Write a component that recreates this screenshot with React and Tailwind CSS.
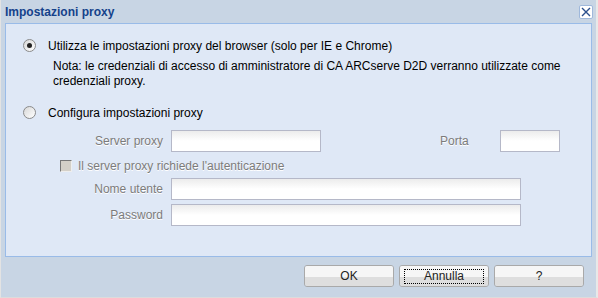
import React from "react";

function Radio({ checked }) {
  return (
    <span className="w-[13px] h-[13px] rounded-full border border-[#8a8a8a] bg-gradient-to-br from-[#d8d8d8] to-white flex items-center justify-center shrink-0">
      {checked ? <span className="w-[5px] h-[5px] rounded-full bg-[#222]" /> : null}
    </span>
  );
}

function Field({ w }) {
  return (
    <div
      className={
        "h-[22px] border border-[#b5b8c8] bg-gradient-to-b from-[#ececec] via-white to-white " + w
      }
    />
  );
}

function Btn({ children, focus }) {
  return (
    <div className="w-[90px] h-[22px] rounded-[3px] border border-[#a9a9a9] flex flex-col overflow-hidden relative">
      <div className="h-[11px] bg-[#f6f6f6]" />
      <div className="flex-1 bg-[#dedede]" />
      <div className="absolute inset-0 flex items-center justify-center">
        {focus ? (
          <span className="border border-dotted border-black w-[80px] h-[15px] flex items-center justify-center leading-none">
            {children}
          </span>
        ) : (
          children
        )}
      </div>
    </div>
  );
}

export default function App() {
  return (
    <div
      className="w-[598px] h-[298px] bg-[#c8d5e4] border-l border-b border-r-[2px] border-l-[#e3e3e3] border-b-[#dcdcdc] border-r-[#e8e8e8] flex flex-col text-[12px] text-black"
      style={{ fontFamily: '"Liberation Sans", Arial, sans-serif' }}
    >
      <div className="h-[23px] flex items-center justify-between pl-[4px] pr-[3px]">
        <span className="font-bold text-[#15428b] text-[12px]">Impostazioni proxy</span>
        <span className="w-[14px] h-[14px] rounded-[2px] border border-[#9fb8db] bg-white flex items-center justify-center">
          <svg width="10" height="10" viewBox="0 0 10 10">
            <path d="M1 1 L9 9 M9 1 L1 9" stroke="#2b4f8c" strokeWidth="1.4" />
          </svg>
        </span>
      </div>
      <div className="mx-[4px] h-[234px] bg-[#dfe8f6] border border-[#99bbe8] pl-[17px] pt-[14px]">
        <div className="flex items-center gap-[12px] h-[15px]">
          <Radio checked />
          <span>Utilizza le impostazioni proxy del browser (solo per IE e Chrome)</span>
        </div>
        <div className="pl-[30px] mt-[6px] leading-[15px] w-[560px]">
          Nota: le credenziali di accesso di amministratore di CA ARCserve D2D verranno utilizzate come credenziali proxy.
        </div>
        <div className="flex items-center gap-[12px] h-[15px] mt-[16px]">
          <Radio />
          <span>Configura impostazioni proxy</span>
        </div>
        <div className="text-[#7b7b7b] [text-shadow:0_1px_0_#ffffff]">
          <div className="flex items-center mt-[10px] h-[22px]">
            <span className="w-[140px] text-right">Server proxy</span>
            <div className="ml-[8px]"><Field w="w-[150px]" /></div>
            <span className="ml-[119px] w-[30px]">Porta</span>
            <div className="ml-[30px]"><Field w="w-[60px]" /></div>
          </div>
          <div className="flex items-center h-[16px] mt-[6px] pl-[37px] gap-[6px]">
            <span className="w-[12px] h-[12px] border border-[#777] border-r-[#eee] border-b-[#eee] bg-[#d4d0c8] shrink-0" />
            <span>Il server proxy richiede l'autenticazione</span>
          </div>
          <div className="flex items-center mt-[4px] h-[22px]">
            <span className="w-[140px] text-right">Nome utente</span>
            <div className="ml-[8px]"><Field w="w-[350px]" /></div>
          </div>
          <div className="flex items-center mt-[4px] h-[22px]">
            <span className="w-[140px] text-right">Password</span>
            <div className="ml-[8px]"><Field w="w-[350px]" /></div>
          </div>
        </div>
      </div>
      <div className="flex justify-end gap-[5px] pr-[12px] mt-[8px] text-[#222]">
        <Btn>OK</Btn>
        <Btn focus>Annulla</Btn>
        <Btn>?</Btn>
      </div>
    </div>
  );
}
